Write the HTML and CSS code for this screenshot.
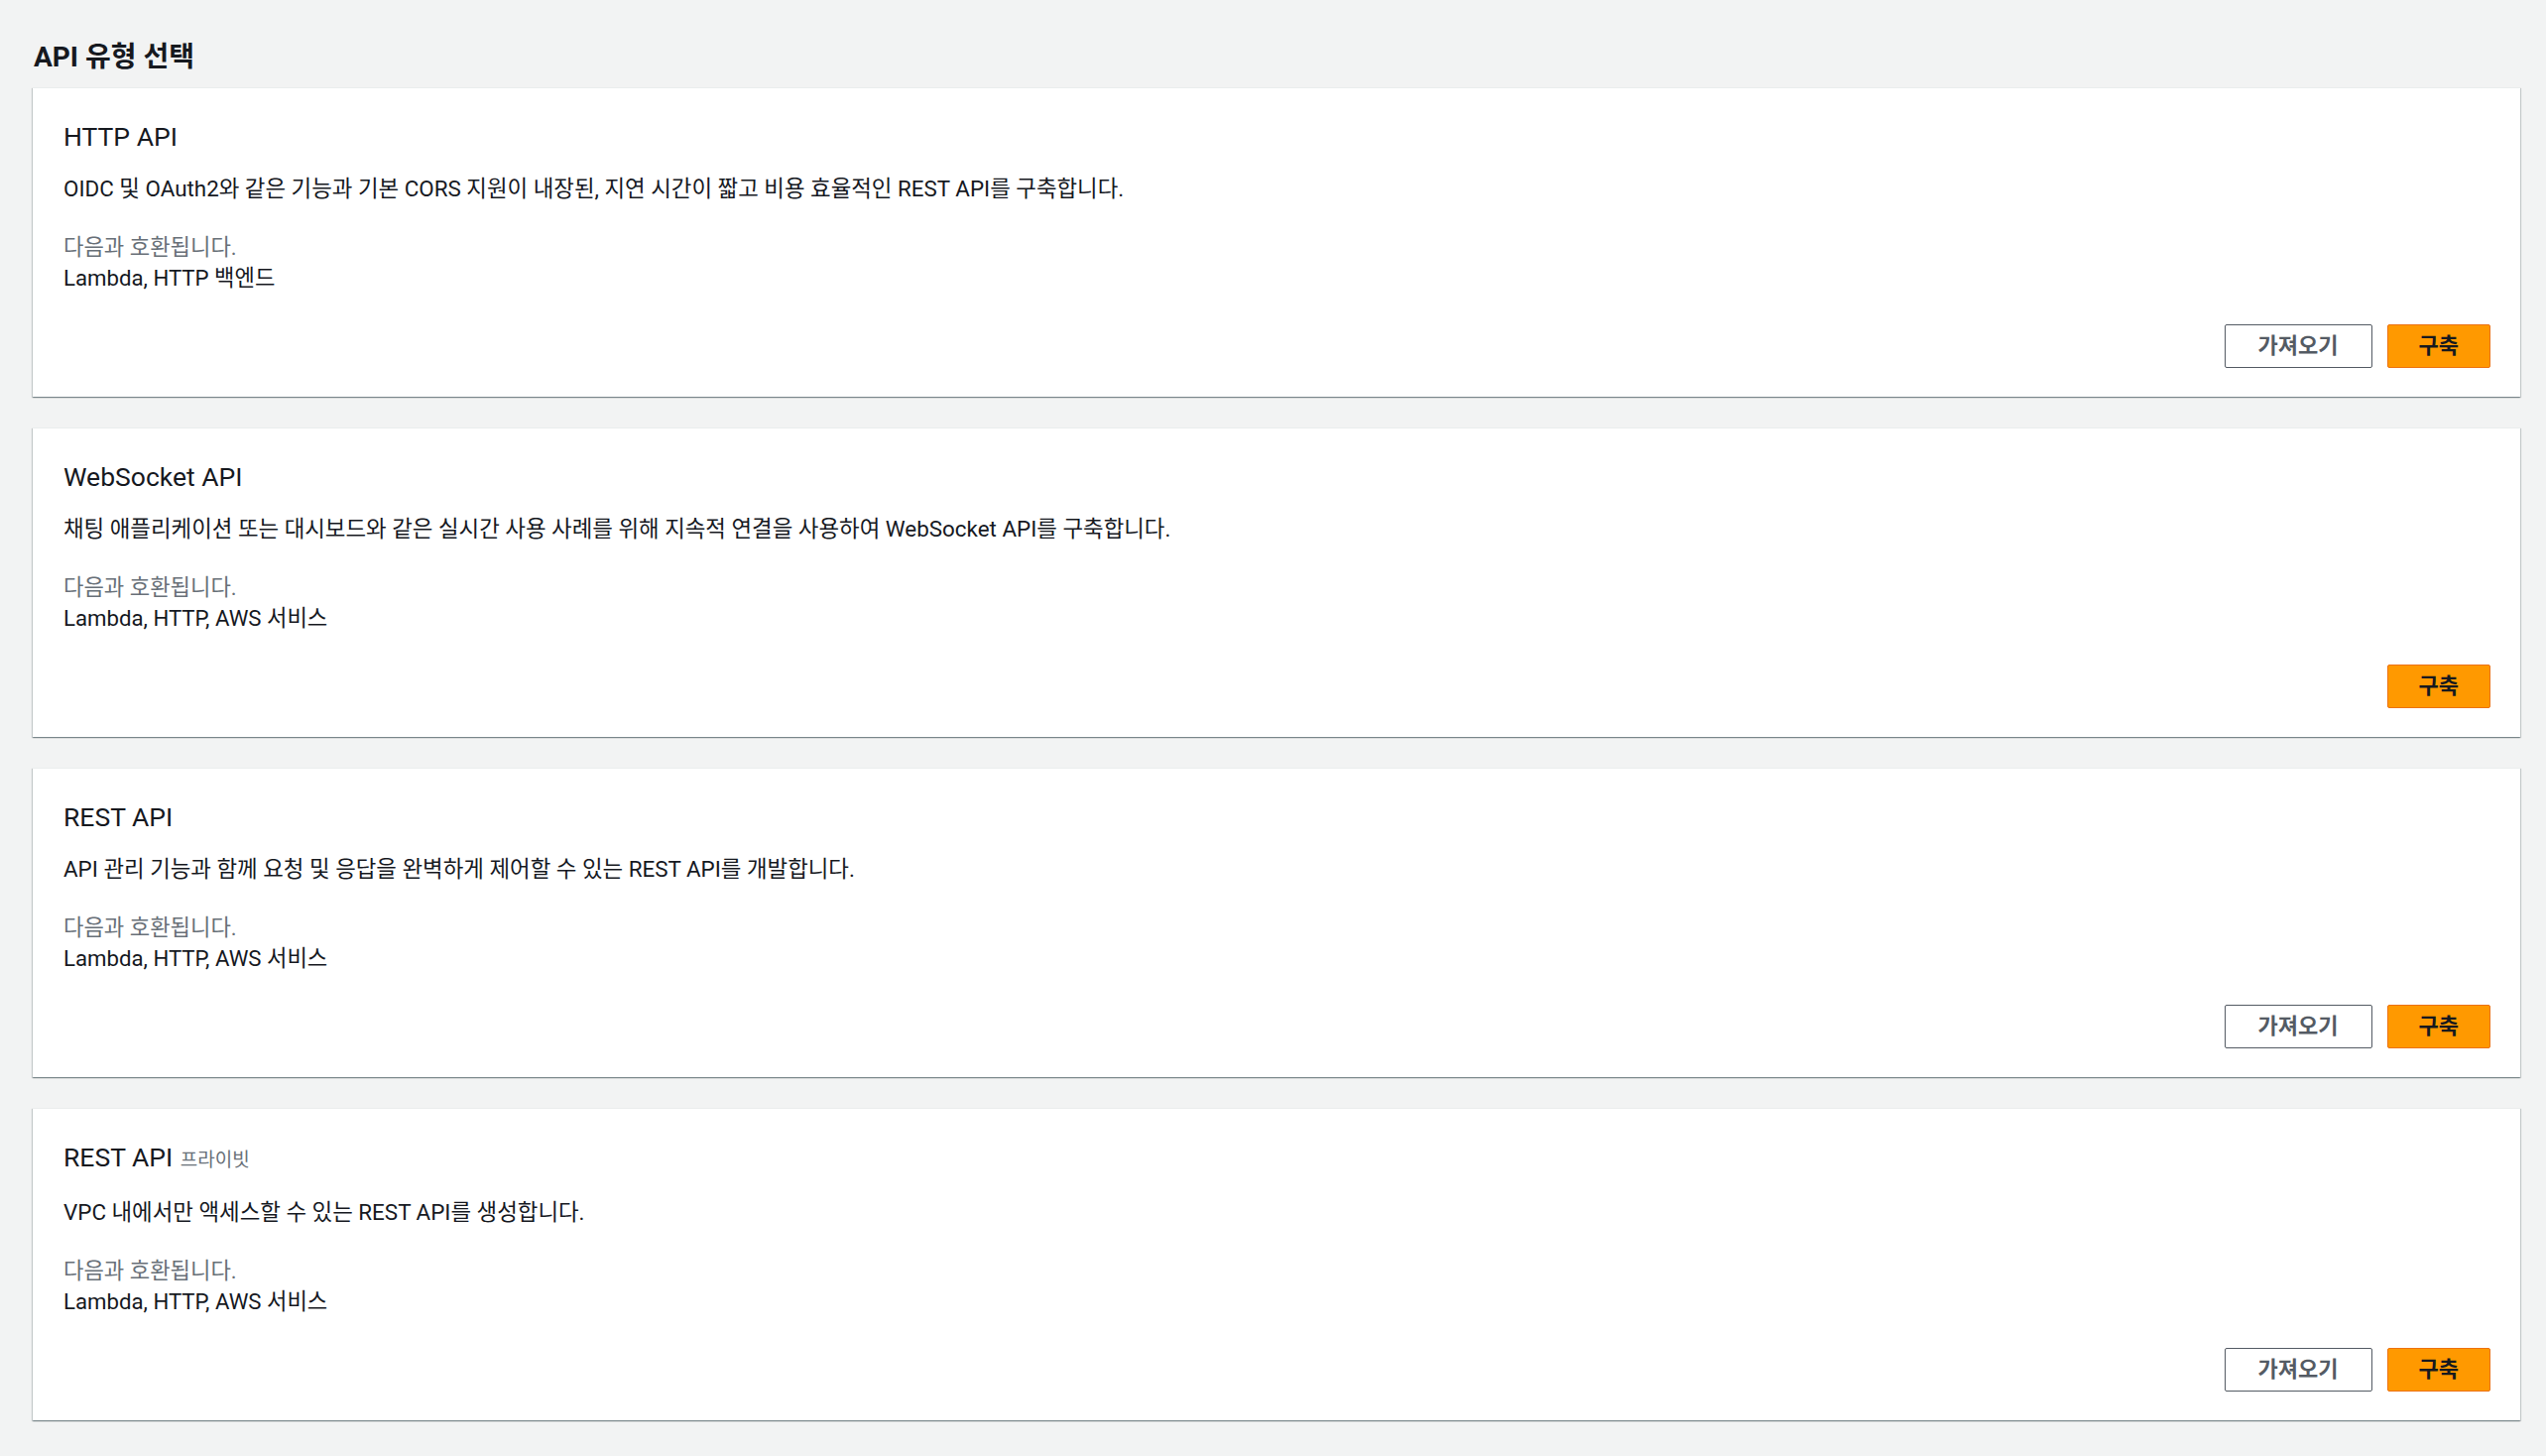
FILE: index.html
```html
<!DOCTYPE html>
<html lang="ko">
<head>
<meta charset="utf-8">
<title>API 유형 선택</title>
<link rel="stylesheet" href="styles.css">
</head>
<body>
<main class="page">
  <h2 class="page-title">API 유형 선택</h2>
  <div class="cards">
    <section class="card">
      <h3 class="card-title">HTTP API</h3>
      <p class="card-desc">OIDC 및 OAuth2와 같은 기능과 기본 CORS 지원이 내장된, 지연 시간이 짧고 비용 효율적인 REST API를 구축합니다.</p>
      <div class="compat">
        <div class="compat-label">다음과 호환됩니다.</div>
        <div class="compat-value">Lambda, HTTP 백엔드</div>
      </div>
      <div class="actions">
        <button class="btn btn-normal">가져오기</button>
        <button class="btn btn-primary">구축</button>
      </div>
    </section>
    <section class="card">
      <h3 class="card-title">WebSocket API</h3>
      <p class="card-desc">채팅 애플리케이션 또는 대시보드와 같은 실시간 사용 사례를 위해 지속적 연결을 사용하여 WebSocket API를 구축합니다.</p>
      <div class="compat">
        <div class="compat-label">다음과 호환됩니다.</div>
        <div class="compat-value">Lambda, HTTP, AWS 서비스</div>
      </div>
      <div class="actions">
        <button class="btn btn-primary">구축</button>
      </div>
    </section>
    <section class="card">
      <h3 class="card-title">REST API</h3>
      <p class="card-desc">API 관리 기능과 함께 요청 및 응답을 완벽하게 제어할 수 있는 REST API를 개발합니다.</p>
      <div class="compat">
        <div class="compat-label">다음과 호환됩니다.</div>
        <div class="compat-value">Lambda, HTTP, AWS 서비스</div>
      </div>
      <div class="actions">
        <button class="btn btn-normal">가져오기</button>
        <button class="btn btn-primary">구축</button>
      </div>
    </section>
    <section class="card">
      <h3 class="card-title">REST API <span class="card-tag">프라이빗</span></h3>
      <p class="card-desc">VPC 내에서만 액세스할 수 있는 REST API를 생성합니다.</p>
      <div class="compat">
        <div class="compat-label">다음과 호환됩니다.</div>
        <div class="compat-value">Lambda, HTTP, AWS 서비스</div>
      </div>
      <div class="actions">
        <button class="btn btn-normal">가져오기</button>
        <button class="btn btn-primary">구축</button>
      </div>
    </section>
  </div>
</main>
</body>
</html>
```
FILE: styles.css
```css
* { box-sizing: border-box; }

html, body {
  margin: 0;
  padding: 0;
  background: #f2f3f3;
}

body {
  font-family: "Roboto", "Noto Sans CJK KR", sans-serif;
  color: #16191f;
}

.page {
  padding: 40px 26px 32px 33px;
}

.page-title {
  margin: 0 0 12px 1px;
  font-size: 28px;
  line-height: 36px;
  font-weight: 700;
  color: #16191f;
}

.cards {
  display: flex;
  flex-direction: column;
  gap: 31px;
}

.card {
  background: #ffffff;
  border-top: 1px solid #eaeded;
  box-shadow: 0 1px 1px 0 rgba(0, 28, 36, 0.3),
              1px 1px 1px 0 rgba(0, 28, 36, 0.15),
              -1px 1px 1px 0 rgba(0, 28, 36, 0.15);
  padding: 32px 30px 29px 31px;
}

.card-title {
  margin: 0;
  font-size: 26.5px;
  line-height: 34px;
  font-weight: 400;
  color: #16191f;
}

.card-tag {
  font-size: 19px;
  color: #687078;
  margin-left: 1px;
}

.card-desc {
  margin: 20px 0 0 0;
  font-size: 22.4px;
  line-height: 31px;
}

.compat {
  margin-top: 28px;
  font-size: 22.2px;
  line-height: 31px;
}

.compat-label {
  color: #687078;
}

.compat-value {
  color: #16191f;
}

.actions {
  margin-top: 31px;
  display: flex;
  justify-content: flex-end;
  gap: 15px;
}

.btn {
  height: 44px;
  border-radius: 2px;
  font-family: "Roboto", "Noto Sans CJK KR", sans-serif;
  font-size: 22px;
  font-weight: 700;
  line-height: 1;
  cursor: pointer;
}

.btn-normal {
  padding: 0 33px;
  background: #ffffff;
  border: 1px solid #545b64;
  color: #545b64;
}

.btn-primary {
  padding: 0 31px;
  background: #ff9900;
  border: 1px solid #ec7211;
  color: #16191f;
}
```
